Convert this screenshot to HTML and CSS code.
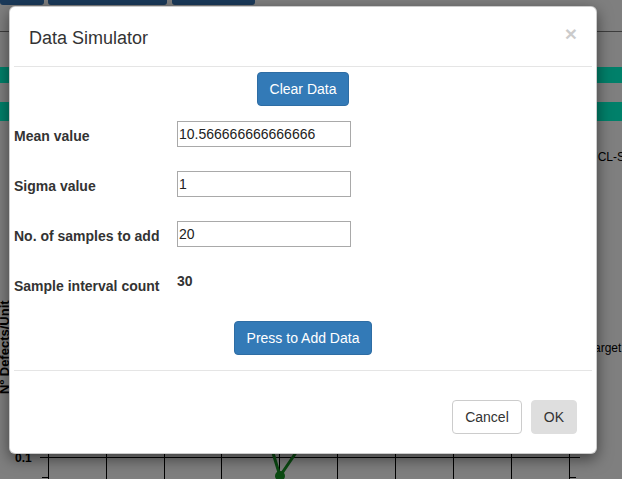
FILE: index.html
```html
<!DOCTYPE html>
<html lang="en">
<head>
    <meta charset="UTF-8">
    <meta name="viewport" content="width=device-width, initial-scale=1.0">
    <title>Data Simulator</title>
    <link rel="stylesheet" href="styles.css">
</head>
<body>
    <!-- page behind the dialog (already dimmed) -->
    <div class="page">
        <div class="toolbar">
            <span class="tb-btn tb-a"></span>
            <span class="tb-btn tb-b"></span>
            <span class="tb-btn tb-c"></span>
        </div>
        <div class="rule"></div>
        <div class="bar bar-a"></div>
        <div class="bar bar-b"></div>
        <svg class="chart" width="622" height="358" viewBox="0 121 622 358">
            <text x="589" y="161" class="legend">UCL-S</text>
            <text x="588" y="352" class="legend">Target</text>
            <text transform="translate(9 394) rotate(-90)" class="axis-title">Nº Defects/Unit</text>
            <text x="15" y="462" class="axis-label">0.1</text>
            <g class="grid">
                <line x1="40" y1="457.5" x2="580" y2="457.5"/>
                <line x1="42" y1="477.5" x2="48" y2="477.5"/>
                <line x1="569" y1="477.5" x2="576" y2="477.5"/>
                <line x1="48.5" y1="440" x2="48.5" y2="479"/>
                <line x1="106.5" y1="440" x2="106.5" y2="479"/>
                <line x1="164.5" y1="440" x2="164.5" y2="479"/>
                <line x1="221.5" y1="440" x2="221.5" y2="479"/>
                <line x1="279.5" y1="440" x2="279.5" y2="479"/>
                <line x1="337.5" y1="440" x2="337.5" y2="479"/>
                <line x1="395.5" y1="440" x2="395.5" y2="479"/>
                <line x1="453.5" y1="440" x2="453.5" y2="479"/>
                <line x1="511.5" y1="440" x2="511.5" y2="479"/>
                <line x1="569.5" y1="440" x2="569.5" y2="479"/>
            </g>
            <polyline class="series" points="266,430 280,476 310,432"/>
            <circle class="series-dot" cx="280" cy="476" r="5"/>
        </svg>
    </div>

    <div class="modal">
        <div class="modal-header">
            <h4 class="modal-title">Data Simulator</h4>
            <button class="close" type="button">&times;</button>
        </div>
        <div class="modal-body">
            <div class="center first">
                <button class="btn btn-primary" type="button">Clear Data</button>
            </div>
            <div class="form-row">
                <label for="mean">Mean value</label>
                <input id="mean" type="text" value="10.566666666666666">
            </div>
            <div class="form-row">
                <label for="sigma">Sigma value</label>
                <input id="sigma" type="text" value="1">
            </div>
            <div class="form-row">
                <label for="samples">No. of samples to add</label>
                <input id="samples" type="text" value="20">
            </div>
            <div class="form-row">
                <label>Sample interval count</label>
                <span class="count">30</span>
            </div>
            <div class="center">
                <button class="btn btn-primary" type="button">Press to Add Data</button>
            </div>
        </div>
        <div class="modal-footer">
            <button class="btn btn-default" type="button">Cancel</button>
            <button class="btn btn-ok" type="button">OK</button>
        </div>
    </div>
</body>
</html>
```
FILE: styles.css
```css
body {
    margin: 0;
    height: 479px;
    overflow: hidden;
    background-color: #7f7f7f;
    font-family: "Liberation Sans", Arial, sans-serif;
    font-size: 14px;
    color: #333;
    position: relative;
}

/* dimmed page */
.toolbar {
    display: flex;
    height: 5px;
}

.tb-btn {
    height: 5px;
    background-color: #1b3a5a;
    border-radius: 0 0 3px 3px;
}

.tb-a { width: 44px; }
.tb-b { width: 119px; margin-left: 4px; }
.tb-c { width: 83px; margin-left: 5px; }

.rule {
    margin-top: 26px;
    height: 1px;
    background-color: #3d3d3d;
}

.bar {
    background-color: #00806a;
}

.bar-a {
    margin-top: 35px;
    height: 16px;
}

.bar-b {
    margin-top: 19px;
    height: 19px;
}

.chart {
    display: block;
}

.chart text {
    font-family: "Liberation Sans", Arial, sans-serif;
    fill: #000;
}

.legend {
    font-size: 12px;
}

.axis-title {
    font-size: 13px;
    font-weight: bold;
}

.axis-label {
    font-size: 12px;
    font-weight: bold;
}

.grid line {
    stroke: #000;
    stroke-width: 1;
}

.series {
    fill: none;
    stroke: #0b4a12;
    stroke-width: 3;
}

.series-dot {
    fill: #0b4a12;
}

/* dialog */
.modal {
    position: absolute;
    top: 6px;
    left: 9px;
    width: 588px;
    box-sizing: border-box;
    padding: 0 4px;
    background-color: #fff;
    border: 1px solid rgba(0, 0, 0, 0.2);
    border-radius: 6px;
    box-shadow: 0 5px 15px rgba(0, 0, 0, 0.5);
}

.modal-header {
    display: flex;
    align-items: flex-start;
    justify-content: space-between;
    padding: 18px 15px 15px 15px;
    border-bottom: 1px solid #e5e5e5;
}

.modal-title {
    margin: 0;
    font-size: 18px;
    font-weight: normal;
    line-height: 26px;
    color: #333;
}

.close {
    margin-top: -2px;
    padding: 0;
    border: none;
    background: none;
    font-family: "Liberation Sans", Arial, sans-serif;
    font-size: 21px;
    font-weight: bold;
    line-height: 1;
    color: #000;
    opacity: 0.2;
    cursor: pointer;
}

.modal-body {
    padding: 5px 0 15px;
}

.center {
    display: flex;
    justify-content: center;
}

.center.first {
    margin-bottom: 15px;
}

.form-row {
    display: flex;
    align-items: flex-start;
    height: 50px;
}

.form-row label {
    width: 163px;
    flex-shrink: 0;
    padding-top: 5px;
    font-weight: bold;
    line-height: 20px;
}

.form-row input {
    width: 174px;
    height: 26px;
    box-sizing: border-box;
    margin: 0;
    padding: 0 1px;
    border: 1px solid #a9a9a9;
    font-family: "Liberation Sans", Arial, sans-serif;
    font-size: 14px;
    color: #222;
}

.count {
    font-weight: bold;
    line-height: 20px;
}

.btn {
    height: 34px;
    padding: 6px 12px;
    font-family: "Liberation Sans", Arial, sans-serif;
    font-size: 14px;
    line-height: 20px;
    border: 1px solid transparent;
    border-radius: 4px;
    cursor: pointer;
}

.btn-primary {
    color: #fff;
    background-color: #337ab7;
    border-color: #2e6da4;
}

.btn-default {
    color: #333;
    background-color: #fff;
    border-color: #ccc;
}

.btn-ok {
    color: #333;
    background-color: #dedede;
    border-color: #dedede;
}

.modal-footer {
    display: flex;
    justify-content: flex-end;
    gap: 9px;
    padding: 29px 15px 19px;
    border-top: 1px solid #e5e5e5;
}
```
